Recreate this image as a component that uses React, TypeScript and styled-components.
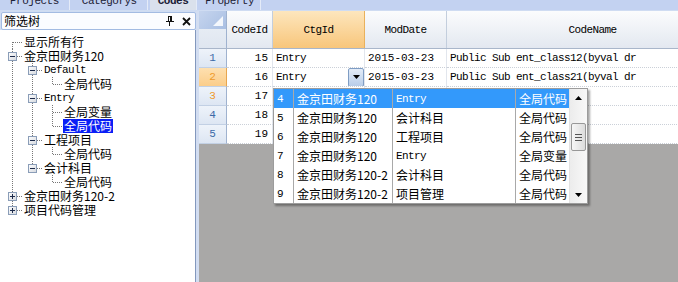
import React from "react";
import styled, { createGlobalStyle } from "styled-components";

const CJK = `"Noto Sans CJK SC", "Noto Sans", sans-serif`;
const MONO = `"Liberation Mono", "DejaVu Sans Mono", "Noto Sans CJK SC", monospace`;

const GlobalStyle = createGlobalStyle`
  html, body { margin: 0; padding: 0; }
  body {
    width: 678px;
    height: 282px;
    overflow: hidden;
    background: #cfdcf2;
    font-family: ${CJK};
  }
`;

type TreeNode = {
  label: string;
  mono?: boolean;
  expanded?: boolean;
  selected?: boolean;
  children?: TreeNode[];
};

const tree: TreeNode[] = [
  { label: "显示所有行" },
  {
    label: "金京田财务120",
    expanded: true,
    children: [
      { label: "Default", mono: true, expanded: true, children: [{ label: "全局代码" }] },
      {
        label: "Entry",
        mono: true,
        expanded: true,
        children: [{ label: "全局变量" }, { label: "全局代码", selected: true }],
      },
      { label: "工程项目", expanded: true, children: [{ label: "全局代码" }] },
      { label: "会计科目", expanded: true, children: [{ label: "全局代码" }] },
    ],
  },
  { label: "金京田财务120-2", children: [{ label: "-" }] },
  { label: "项目代码管理", children: [{ label: "-" }] },
];

type FlatRow = { node: TreeNode; guides: boolean[]; first: boolean; last: boolean };

function flatten(nodes: TreeNode[], guides: boolean[], out: FlatRow[]) {
  nodes.forEach((n, i) => {
    const last = i === nodes.length - 1;
    out.push({ node: n, guides, first: guides.length === 0 && i === 0, last });
    if (n.children && n.expanded) flatten(n.children, [...guides, !last], out);
  });
  return out;
}

const columns = [
  { title: "CodeId", width: 46 },
  { title: "CtgId", width: 92, hot: true },
  { title: "ModDate", width: 82 },
  { title: "CodeName", width: 292 },
];

const rows = [
  { id: 15, ctg: "Entry", date: "2015-03-23", name: "Public Sub ent_class12(byval dr" },
  { id: 16, ctg: "Entry", date: "2015-03-23", name: "Public Sub ent_class21(byval dr", editing: true },
  { id: 17, ctg: "", date: "", name: "" },
  { id: 18, ctg: "", date: "", name: "" },
  { id: 19, ctg: "", date: "", name: "" },
];

const options = [
  { idx: 4, proj: "金京田财务120", ctg: "Entry", path: "全局代码" },
  { idx: 5, proj: "金京田财务120", ctg: "会计科目", path: "全局代码" },
  { idx: 6, proj: "金京田财务120", ctg: "工程项目", path: "全局代码" },
  { idx: 7, proj: "金京田财务120", ctg: "Entry", path: "全局变量" },
  { idx: 8, proj: "金京田财务120-2", ctg: "会计科目", path: "全局代码" },
  { idx: 9, proj: "金京田财务120-2", ctg: "项目管理", path: "全局代码" },
];

const isLatin = (s: string) => /^[\x00-\x7f]+$/.test(s);

const Elbow = ({ first, last, box, open }: { first: boolean; last: boolean; box: boolean; open?: boolean }) => (
  <svg width="20" height="14" shapeRendering="crispEdges">
    <line x1="10.5" y1={first ? 7 : 0} x2="10.5" y2={last ? 7 : 14} stroke="#777" strokeDasharray="1 1" />
    <line x1="11" y1="7.5" x2="20" y2="7.5" stroke="#777" strokeDasharray="1 1" />
    {box && (
      <>
        <defs>
          <linearGradient id="bx" x1="0" y1="0" x2="1" y2="1">
            <stop offset="0" stopColor="#ffffff" />
            <stop offset="1" stopColor="#d4d8de" />
          </linearGradient>
        </defs>
        <rect x="6.5" y="3.5" width="8" height="8" fill="url(#bx)" stroke="#8a9db8" />
        <line x1="8" y1="7.5" x2="13" y2="7.5" stroke="#1c2a4a" />
        {!open && <line x1="10.5" y1="5" x2="10.5" y2="10" stroke="#1c2a4a" />}
      </>
    )}
  </svg>
);

const Guide = ({ on }: { on: boolean }) => (
  <svg width="20" height="14" shapeRendering="crispEdges">
    {on && <line x1="10.5" y1="0" x2="10.5" y2="14" stroke="#777" strokeDasharray="1 1" />}
  </svg>
);

const PinIcon = () => (
  <svg width="10" height="10" shapeRendering="crispEdges">
    <path d="M3.5 0.5h3v5h-3z" fill="none" stroke="#111" />
    <path d="M5.5 0.5v5" stroke="#111" />
    <path d="M1 5.5h8M4.5 6v4" stroke="#111" />
  </svg>
);

const CloseIcon = () => (
  <svg width="9" height="9">
    <path d="M1 1l7 7M8 1l-7 7" stroke="#111" strokeWidth="1.8" />
  </svg>
);

const CornerGlyph = () => (
  <svg width="12" height="12">
    <path d="M11 1v10H1z" fill="#ffffff" opacity="0.85" />
  </svg>
);

const DownTri = ({ w = 7 }: { w?: number }) => (
  <svg width={w} height="4">
    <path d={`M0 0h${w}l-${w / 2} 4z`} fill="#000" />
  </svg>
);

const UpTri = () => (
  <svg width="7" height="4">
    <path d="M0 4h7l-3.5-4z" fill="#000" />
  </svg>
);

export default function App() {
  const flat = flatten(tree, [], []);
  return (
    <Window>
      <GlobalStyle />
      <TabStrip>
        <Tab $pad={10}><span>Projects</span></Tab>
        <Tab $pad={10}><span>Categorys</span></Tab>
        <Tab $pad={8} $active><span>Codes</span></Tab>
        <Tab $pad={6}><span>Property</span></Tab>
      </TabStrip>
      <Body>
        <LeftPanel>
          <PanelHeader>
            <span>筛选树</span>
            <HeaderIcons>
              <PinIcon />
              <CloseIcon />
            </HeaderIcons>
          </PanelHeader>
          <TreeArea>
            {flat.map((r, i) => (
              <TreeRow key={i}>
                {r.guides.map((g, j) => (
                  <Guide key={j} on={g} />
                ))}
                <Elbow first={r.first} last={r.last} box={!!r.node.children} open={r.node.expanded} />
                <TreeLabel $mono={!!r.node.mono} $selected={!!r.node.selected}>
                  {r.node.label}
                </TreeLabel>
              </TreeRow>
            ))}
          </TreeArea>
        </LeftPanel>
        <Splitter />
        <GridArea>
          <HeaderRow>
            <Corner>
              <CornerTop>
                <CornerGlyph />
              </CornerTop>
            </Corner>
            {columns.map((c) => (
              <HeaderCell key={c.title} $w={c.width} $hot={!!c.hot}>
                {c.title}
              </HeaderCell>
            ))}
          </HeaderRow>
          {rows.map((r, i) => (
            <DataRow key={r.id}>
              <RowHead $current={i === 1} $hover={i === 2}>
                {i + 1}
              </RowHead>
              <Cell $w={46} $align="right">
                <Num>{r.id}</Num>
              </Cell>
              <Cell $w={92}>
                <Mono>{r.ctg}</Mono>
                {r.editing && (
                  <DropButton>
                    <DownTri />
                  </DropButton>
                )}
              </Cell>
              <Cell $w={82}>
                <Num>{r.date}</Num>
              </Cell>
              <Cell $w={292}>
                <Mono>{r.name}</Mono>
              </Cell>
            </DataRow>
          ))}
          <Dropdown>
            <OptionList>
              {options.map((o, i) => (
                <OptionRow key={o.idx} $selected={i === 0}>
                  <OptCell $w={20} $line>
                    <Num>{o.idx}</Num>
                  </OptCell>
                  <OptCell $w={99} $line>
                    {o.proj}
                  </OptCell>
                  <OptCell $w={123} $line>
                    {isLatin(o.ctg) ? <Mono>{o.ctg}</Mono> : o.ctg}
                  </OptCell>
                  <OptCell $w={53}>{o.path}</OptCell>
                </OptionRow>
              ))}
            </OptionList>
            <ScrollBar>
              <ScrollArrow>
                <UpTri />
              </ScrollArrow>
              <ScrollTrack>
                <Thumb>
                  <Grip />
                  <Grip />
                  <Grip />
                </Thumb>
              </ScrollTrack>
              <ScrollArrow>
                <DownTri />
              </ScrollArrow>
            </ScrollBar>
          </Dropdown>
        </GridArea>
      </Body>
    </Window>
  );
}

const Window = styled.div`
  width: 678px;
  height: 282px;
  display: flex;
  flex-direction: column;
  overflow: hidden;
  background: #cfdcf2;
`;

const TabStrip = styled.div`
  flex: none;
  height: 10px;
  display: flex;
  background: #c3d2f1;
  overflow: hidden;
`;

const Tab = styled.div<{ $active?: boolean; $pad: number }>`
  height: 10px;
  padding: 0 ${(p) => p.$pad}px;
  margin-right: 3px;
  overflow: hidden;
  background: ${(p) => (p.$active ? "#dae1ec" : "transparent")};
  box-shadow: 1px 0 0 #e4ebf8;
  color: #1b2035;
  font: ${(p) => (p.$active ? "bold" : "normal")} 11px/12px ${MONO};
  letter-spacing: -0.5px;

  & > span {
    display: block;
    margin-top: -5px;
  }
`;

const Body = styled.div`
  flex: 1;
  min-height: 0;
  display: flex;
  padding-top: 1px;
`;

const LeftPanel = styled.div`
  width: 196px;
  flex: none;
  display: flex;
  flex-direction: column;
  padding-top: 1px;
`;

const PanelHeader = styled.div`
  height: 16px;
  width: 189px;
  margin-left: 1px;
  padding: 0 2px;
  display: flex;
  align-items: center;
  justify-content: space-between;
  background: #fbfcff;
  border: 1px solid #a3bbe2;
  border-radius: 2px;
  font: 12px/16px ${CJK};
  color: #000;
`;

const HeaderIcons = styled.div`
  display: flex;
  align-items: center;
  gap: 7px;
  padding-right: 2px;
`;

const TreeArea = styled.div`
  flex: 1;
  background: #ffffff;
  border-right: 1px solid #8398bd;
  padding: 5px 0 0 2px;
`;

const TreeRow = styled.div`
  height: 14px;
  display: flex;
  align-items: center;

  & > svg {
    flex: none;
  }
`;

const TreeLabel = styled.span<{ $mono: boolean; $selected: boolean }>`
  margin-left: 1px;
  padding: 0 1px;
  height: 14px;
  overflow: hidden;
  white-space: nowrap;
  font: ${(p) => (p.$mono ? `11px/14px ${MONO}` : `12px/14px ${CJK}`)};
  letter-spacing: ${(p) => (p.$mono ? "-0.6px" : "0")};
  color: ${(p) => (p.$selected ? "#ffffff" : "#000000")};
  background: ${(p) => (p.$selected ? "#0a1ff6" : "transparent")};
`;

const Splitter = styled.div`
  width: 3px;
  flex: none;
  background: #d2ddf1;
`;

const GridArea = styled.div`
  flex: 1;
  position: relative;
  overflow: hidden;
  background: #a9a8a7;
`;

const HeaderRow = styled.div`
  height: 38px;
  display: flex;
  background: linear-gradient(#fbfcfd, #e3e8f0);
  border-bottom: 1px solid #a9b6ca;
  box-sizing: border-box;
`;

const Corner = styled.div`
  width: 28px;
  flex: none;
  display: flex;
  flex-direction: column;
  background: linear-gradient(#edf1f7, #dfe6f0);
  border-right: 1px solid #9fb2cf;
  box-sizing: border-box;
`;

const CornerTop = styled.div`
  height: 18px;
  display: flex;
  align-items: flex-end;
  justify-content: flex-end;
  padding: 0 2px 2px 0;
  box-sizing: border-box;
  background: linear-gradient(135deg, #c6d5ee, #a9bfe3);
`;

const HeaderCell = styled.div<{ $w: number; $hot: boolean }>`
  width: ${(p) => p.$w}px;
  flex: none;
  display: flex;
  align-items: center;
  justify-content: center;
  box-sizing: border-box;
  border-right: 1px solid ${(p) => (p.$hot ? "#e9b15c" : "#c3cedd")};
  background: ${(p) => (p.$hot ? "linear-gradient(#fde6bd, #f8c67b)" : "transparent")};
  font: 11px/12px ${MONO};
  letter-spacing: -0.6px;
  color: #000;
`;

const DataRow = styled.div`
  height: 19px;
  display: flex;
  background: #ffffff;
`;

const RowHead = styled.div<{ $current: boolean; $hover: boolean }>`
  width: 28px;
  flex: none;
  display: flex;
  align-items: center;
  justify-content: center;
  box-sizing: border-box;
  background: ${(p) => (p.$current ? "linear-gradient(#fee0b0, #fbcd8a)" : "linear-gradient(#eef3fa, #dde6f3)")};
  border-right: 1px solid ${(p) => (p.$current ? "#e7a650" : "#9fb2cf")};
  border-bottom: 1px solid #c2d0e4;
  color: ${(p) => (p.$current || p.$hover ? "#ef9a2a" : "#3c6aa7")};
  font: 11px/12px ${MONO};
`;

const Cell = styled.div<{ $w: number; $align?: "left" | "right" }>`
  width: ${(p) => p.$w}px;
  flex: none;
  display: flex;
  align-items: center;
  justify-content: ${(p) => (p.$align === "right" ? "flex-end" : "flex-start")};
  padding: 0 4px 0 3px;
  box-sizing: border-box;
  border-right: 1px solid #e2e6ed;
  border-bottom: 1px dotted #cbd0d8;
  white-space: nowrap;
  overflow: hidden;
`;

const Mono = styled.span`
  font: 11px/12px ${MONO};
  letter-spacing: -0.6px;
  color: #000;
  white-space: pre;
`;

const Num = styled.span`
  font: 11px/12px ${MONO};
  color: #000;
`;

const DropButton = styled.div`
  margin-left: auto;
  margin-right: -4px;
  width: 16px;
  height: 19px;
  box-sizing: border-box;
  display: flex;
  align-items: center;
  justify-content: center;
  background: linear-gradient(#e3ecf8, #b8cde9);
  border: 1px solid #7f9dc4;
  border-radius: 2px;
`;

const Dropdown = styled.div`
  position: absolute;
  left: 74px;
  top: 77px;
  width: 315px;
  height: 116px;
  box-sizing: border-box;
  display: flex;
  background: #ffffff;
  border: 1px solid #9c9c9c;
  box-shadow: 2px 2px 2px rgba(0, 0, 0, 0.35);
`;

const OptionList = styled.div`
  flex: 1;
  display: flex;
  flex-direction: column;
`;

const OptionRow = styled.div<{ $selected: boolean }>`
  height: 19px;
  display: flex;
  background: ${(p) => (p.$selected ? "#3399fb" : "#ffffff")};
  color: ${(p) => (p.$selected ? "#ffffff" : "#000000")};

  & span {
    color: inherit;
  }
`;

const OptCell = styled.div<{ $w: number; $line?: boolean }>`
  width: ${(p) => p.$w}px;
  flex: none;
  display: flex;
  align-items: center;
  padding-left: 3px;
  box-sizing: border-box;
  border-right: ${(p) => (p.$line ? "1px solid #a9a9a9" : "none")};
  font: 12px/19px ${CJK};
  white-space: nowrap;
  overflow: hidden;
`;

const ScrollBar = styled.div`
  width: 18px;
  flex: none;
  display: flex;
  flex-direction: column;
  background: linear-gradient(90deg, #ececec, #f8f8f8);
  border-left: 1px solid #e2e2e2;
  box-sizing: border-box;
`;

const ScrollArrow = styled.div`
  height: 17px;
  display: flex;
  align-items: center;
  justify-content: center;
`;

const ScrollTrack = styled.div`
  flex: 1;
  padding-top: 17px;
  display: flex;
  flex-direction: column;
  align-items: center;
`;

const Thumb = styled.div`
  width: 15px;
  height: 28px;
  box-sizing: border-box;
  display: flex;
  flex-direction: column;
  align-items: center;
  justify-content: center;
  gap: 2px;
  background: linear-gradient(90deg, #f6f6f6, #dcdcdc);
  border: 1px solid #989898;
  border-radius: 2px;
`;

const Grip = styled.div`
  width: 7px;
  height: 1px;
  background: #555;
`;
